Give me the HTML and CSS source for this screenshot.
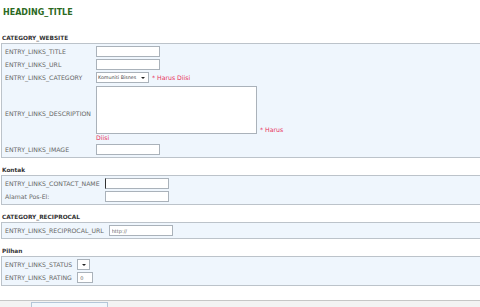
FILE: index.html
```html
<!DOCTYPE html>
<html lang="ms">
<head>
  <meta charset="UTF-8">
  <meta name="viewport" content="width=device-width, initial-scale=1.0">
  <title>HEADING_TITLE</title>
  <link rel="stylesheet" href="styles.css">
</head>
<body>
  <div class="page">
    <h1 class="page-title">HEADING_TITLE</h1>

    <form class="links-form">
      <div class="group-title">CATEGORY_WEBSITE</div>
      <div class="group">
        <table class="fields">
          <tr>
            <td class="label">ENTRY_LINKS_TITLE</td>
            <td class="field"><input class="text" type="text"></td>
          </tr>
          <tr>
            <td class="label">ENTRY_LINKS_URL</td>
            <td class="field"><input class="text" type="text"></td>
          </tr>
          <tr>
            <td class="label">ENTRY_LINKS_CATEGORY</td>
            <td class="field">
              <span class="select-wrap"><select class="select"><option>Komuniti Bisnes</option></select></span>
              <span class="required">* Harus Diisi</span>
            </td>
          </tr>
          <tr>
            <td class="label">ENTRY_LINKS_DESCRIPTION</td>
            <td class="field">
              <div class="wrap-box"><textarea class="area"></textarea> <span class="required">* Harus Diisi</span></div>
            </td>
          </tr>
          <tr>
            <td class="label">ENTRY_LINKS_IMAGE</td>
            <td class="field"><input class="text" type="text"></td>
          </tr>
        </table>
      </div>

      <div class="group-title">Kontak</div>
      <div class="group">
        <table class="fields">
          <tr>
            <td class="label">ENTRY_LINKS_CONTACT_NAME</td>
            <td class="field"><input class="text focused" type="text"></td>
          </tr>
          <tr>
            <td class="label">Alamat Pos-El:</td>
            <td class="field"><input class="text" type="text"></td>
          </tr>
        </table>
      </div>

      <div class="group-title">CATEGORY_RECIPROCAL</div>
      <div class="group">
        <table class="fields">
          <tr>
            <td class="label">ENTRY_LINKS_RECIPROCAL_URL</td>
            <td class="field"><input class="text" type="text" value="http://"></td>
          </tr>
        </table>
      </div>

      <div class="group-title">Pilhan</div>
      <div class="group">
        <table class="fields">
          <tr>
            <td class="label">ENTRY_LINKS_STATUS</td>
            <td class="field"><span class="select-wrap"><select class="select tiny"><option></option></select></span></td>
          </tr>
          <tr>
            <td class="label">ENTRY_LINKS_RATING</td>
            <td class="field"><input class="text short" type="text" value="0"></td>
          </tr>
        </table>
      </div>

      <div class="form-footer">
        <span class="footer-button"></span>
      </div>
    </form>
  </div>
</body>
</html>
```

FILE: styles.css
```css
* {
  margin: 0;
  padding: 0;
  box-sizing: border-box;
}
html, body {
  width: 100%;
  height: 100%;
  overflow: hidden;
  background: #fff;
  font-family: "DejaVu Sans", Verdana, sans-serif;
  color: #666;
}
.page {
  padding: 8px 0 0 1px;
}
.page-title {
  font-size: 8px;
  line-height: 10px;
  font-weight: bold;
  color: #2d6a1f;
  padding-left: 2px;
  margin-bottom: 16px;
}
.group-title {
  font-size: 5.8px;
  line-height: 9px;
  font-weight: bold;
  color: #333;
  padding-left: 1px;
}
.group {
  background: #eff6fd;
  border: 1px solid #bcc3ca;
  padding: 1px;
  margin-right: -8px;
  margin-bottom: 8px;
}
.fields {
  border-collapse: collapse;
}
.fields td {
  padding: 1px 2px;
  vertical-align: middle;
  font-size: 6.2px;
  line-height: 8px;
}
.fields .label {
  padding-right: 3px;
  white-space: nowrap;
}
.text {
  display: block;
  width: 64px;
  height: 11px;
  border: 1px solid #aab2ba;
  background: #fff;
  font-family: inherit;
  font-size: 5px;
  padding: 0 2px;
  color: #666;
  outline: none;
}
.text.short {
  width: 16px;
}
.text.focused {
  border-left-color: #333;
}
.select-wrap {
  position: relative;
  display: inline-block;
  vertical-align: middle;
}
.select-wrap::after {
  content: "";
  position: absolute;
  right: 4px;
  top: 5px;
  border-left: 2px solid transparent;
  border-right: 2px solid transparent;
  border-top: 2px solid #222;
  pointer-events: none;
}
.select {
  appearance: none;
  -webkit-appearance: none;
  display: block;
  width: 53px;
  height: 11px;
  border: 1px solid #aab2ba;
  border-radius: 0;
  background: #fff;
  font-family: inherit;
  font-size: 4.8px;
  padding: 0 0 0 1px;
  color: #444;
}
.select.tiny {
  width: 13px;
}
.required {
  color: #e8305a;
  margin-left: 1px;
  vertical-align: middle;
}
.wrap-box {
  width: 190px;
  padding-top: 1px;
}
.wrap-box .required {
  vertical-align: baseline;
}
.area {
  width: 161px;
  height: 48px;
  border: 1px solid #aab2ba;
  background: #fff;
  resize: none;
  vertical-align: bottom;
  outline: none;
}
.form-footer {
  margin-top: 14px;
  margin-left: -1px;
  border-top: 1px solid #c6c6c6;
  background: #f3f3f3;
  height: 20px;
  padding: 1px 0 0 31px;
}
.footer-button {
  display: block;
  width: 77px;
  height: 14px;
  border: 1px solid #b4c6d8;
  background: #f2f7fc;
}
```
